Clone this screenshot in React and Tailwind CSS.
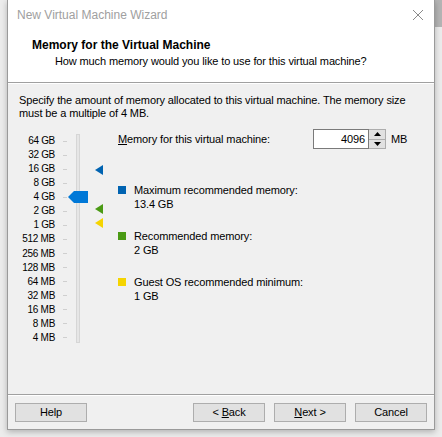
import React from "react";

const sizes = [
  "64 GB",
  "32 GB",
  "16 GB",
  "8 GB",
  "4 GB",
  "2 GB",
  "1 GB",
  "512 MB",
  "256 MB",
  "128 MB",
  "64 MB",
  "32 MB",
  "16 MB",
  "8 MB",
  "4 MB",
];

const Legend = ({ color, label, value }) => (
  <div className="flex gap-[8px]">
    <div className={`w-[8px] h-[8px] mt-[3px] ${color}`}></div>
    <div className="leading-[14px]">
      <div>{label}</div>
      <div>{value}</div>
    </div>
  </div>
);

const Button = ({ children }) => (
  <button className="w-[72px] h-[19px] bg-[#e1e1e1] border border-[#adadad] text-[11px] tracking-[-0.12px] leading-[17px] text-black">
    {children}
  </button>
);

export default function App() {
  return (
    <div
      className="w-[442px] h-[437px] bg-[#ececec] relative overflow-hidden text-[11px] tracking-[-0.12px] text-black whitespace-nowrap"
      style={{ fontFamily: '"Liberation Sans", Arial, sans-serif' }}
    >
      <div className="absolute right-0 top-0 w-[7px] h-[27px] bg-[#b4b4b4]"></div>
      <div className="absolute left-[7px] top-0 w-[428px] h-[430px] border border-t-0 border-[#9a9a9a] bg-[#f0f0f0] flex flex-col shadow-[0_2px_6px_rgba(0,0,0,0.25)]">
        <div className="h-[30px] bg-white flex items-center justify-between pl-[9px] pr-[9px]">
          <span className="text-[12px] tracking-normal text-[#a0a0a0]">New Virtual Machine Wizard</span>
          <svg width="12" height="12" viewBox="0 0 12 12" className="mr-[1px]">
            <path d="M1 1L11 11M11 1L1 11" stroke="#8a8a8a" strokeWidth="1" />
          </svg>
        </div>
        <div className="h-[53px] bg-white border-b border-[#a0a0a0] pl-[24px] pt-[7px]">
          <div className="font-bold text-[12px] tracking-normal leading-[16px]">Memory for the Virtual Machine</div>
          <div className="pl-[23px] leading-[17px]">How much memory would you like to use for this virtual machine?</div>
        </div>
        <div className="flex-1 flex flex-col border-t border-white">
          <div className="pl-[11px] pt-[10px] leading-[13px]">
            <div>Specify the amount of memory allocated to this virtual machine. The memory size</div>
            <div>must be a multiple of 4 MB.</div>
          </div>
          <div className="flex mt-[14px]">
            <div className="relative w-[100px] h-[212px]">
              <div className="flex flex-col">
                {sizes.map((s) => (
                  <div key={s} className="flex items-center h-[14.07px]">
                    <span className="w-[47px] text-right text-[10px] tracking-[-0.3px] leading-[14px]">{s}</span>
                    <span className="ml-[8px] w-[4px] h-[1px] bg-[#cfcfcf]"></span>
                  </div>
                ))}
              </div>
              <div className="absolute left-[68px] top-[0px] w-[4px] h-[209px] bg-[#e6e6e6] border border-[#d6d6d6]"></div>
              <svg className="absolute left-[60px] top-[57px]" width="20" height="12" viewBox="0 0 20 12">
                <path d="M0 6L6 0H20V12H6Z" fill="#0078d7" />
              </svg>
              <svg className="absolute left-[87px] top-[31px]" width="8" height="10" viewBox="0 0 8 10">
                <path d="M0 5L8 0V10Z" fill="#0063b1" />
              </svg>
              <svg className="absolute left-[87px] top-[70px]" width="8" height="10" viewBox="0 0 8 10">
                <path d="M0 5L8 0V10Z" fill="#4a9a14" />
              </svg>
              <svg className="absolute left-[87px] top-[84px]" width="8" height="10" viewBox="0 0 8 10">
                <path d="M0 5L8 0V10Z" fill="#f5d400" />
              </svg>
            </div>
            <div className="flex-1 pl-[10px]">
              <div className="flex items-center h-[20px] -mt-[5px]">
                <span className="w-[195px]">
                  <span className="underline">M</span>emory for this virtual machine:
                </span>
                <div className="w-[56px] h-[20px] bg-white border border-[#7a7a7a] flex items-center justify-end pr-[3px]">
                  4096
                </div>
                <div className="w-[17px] h-[20px] flex flex-col border border-l-0 border-[#adadad] bg-[#f0f0f0]">
                  <div className="flex-1 flex items-center justify-center border-b border-[#adadad] bg-[#e1e1e1]">
                    <svg width="7" height="4" viewBox="0 0 7 4"><path d="M0 4L3.5 0L7 4Z" fill="#000" /></svg>
                  </div>
                  <div className="flex-1 flex items-center justify-center bg-[#e1e1e1]">
                    <svg width="7" height="4" viewBox="0 0 7 4"><path d="M0 0L3.5 4L7 0Z" fill="#000" /></svg>
                  </div>
                </div>
                <span className="ml-[5px]">MB</span>
              </div>
              <div className="mt-[34px] flex flex-col gap-[18px]">
                <Legend color="bg-[#0063b1]" label="Maximum recommended memory:" value="13.4 GB" />
                <Legend color="bg-[#4a9a14]" label="Recommended memory:" value="2 GB" />
                <Legend color="bg-[#f5d400]" label="Guest OS recommended minimum:" value="1 GB" />
              </div>
            </div>
          </div>
          <div className="mt-auto border-t border-[#a0a0a0] shadow-[0_1px_0_#fff]"></div>
          <div className="h-[34px] flex items-center pl-[7px] pr-[7px]">
            <Button>Help</Button>
            <div className="flex-1"></div>
            <div className="flex gap-[9px]">
              <Button>
                &lt; <span className="underline">B</span>ack
              </Button>
              <Button>
                <span className="underline">N</span>ext &gt;
              </Button>
              <Button>Cancel</Button>
            </div>
          </div>
        </div>
      </div>
    </div>
  );
}
